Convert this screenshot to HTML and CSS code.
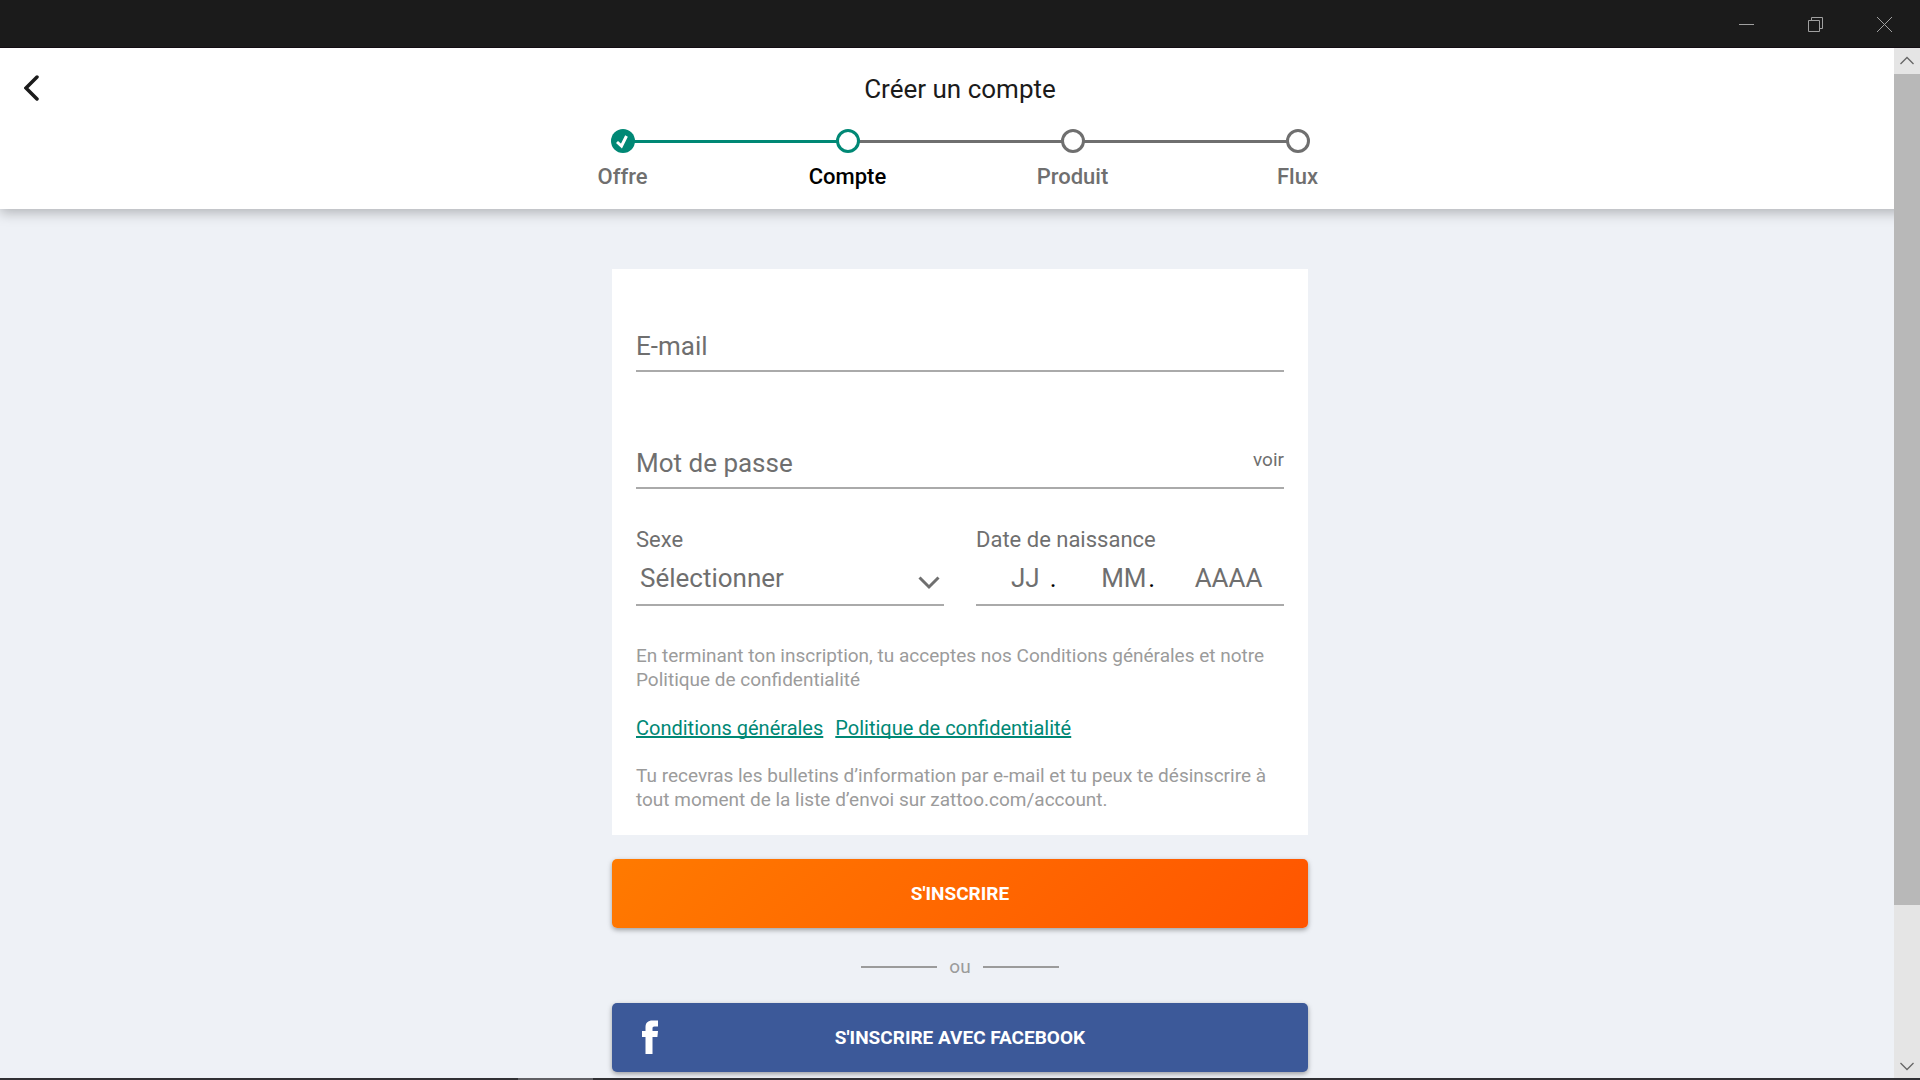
FILE: index.html
```html
<!DOCTYPE html>
<html lang="fr">
<head>
  <meta charset="UTF-8">
  <meta name="viewport" content="width=device-width, initial-scale=1.0">
  <title>Créer un compte</title>
  <link rel="stylesheet" href="styles.css">
</head>
<body>
  <div class="titlebar">
    <button type="button" aria-label="Réduire">
      <svg width="15" height="15" viewBox="0 0 15 15"><path d="M0 7.5h15"/></svg>
    </button>
    <button type="button" aria-label="Restaurer">
      <svg width="15" height="15" viewBox="0 0 15 15"><path d="M.5 3.500h11v11h-11zM3.500 3.500v-3h11v11h-3"/></svg>
    </button>
    <button type="button" aria-label="Fermer">
      <svg width="15" height="15" viewBox="0 0 15 15"><path d="M0 0l15 15M15 0l-15 15"/></svg>
    </button>
  </div>

  <div class="window">
    <header class="header">
      <div class="topline">
        <button type="button" class="back" aria-label="Retour">
          <svg width="16" height="32" viewBox="0 0 16 32"><path d="M13 5L2 16l11 11"/></svg>
        </button>
        <h1>Créer un compte</h1>
      </div>
      <ol class="steps">
        <li class="done">
          <span class="dot"><svg width="24" height="24" viewBox="0 0 24 24"><path d="M6 13l4.500 4L15.500 7"/></svg></span>
          Offre
        </li>
        <li class="current"><span class="dot"></span>Compte</li>
        <li><span class="dot"></span>Produit</li>
        <li><span class="dot"></span>Flux</li>
      </ol>
    </header>

    <main class="content">
      <form class="signup">
        <div class="card">
          <div class="field">
            <label for="email">E-mail</label>
            <input type="email" id="email">
          </div>
          <div class="field">
            <label for="password">Mot de passe</label>
            <input type="password" id="password">
            <button type="button" class="show">voir</button>
          </div>

          <div class="row">
            <div class="group">
              <label for="gender">Sexe</label>
              <div class="select">
                <select id="gender">
                  <option>Sélectionner</option>
                  <option>Femme</option>
                  <option>Homme</option>
                </select>
                <svg width="22" height="14" viewBox="0 0 22 14"><path d="M1.500 1.500L11 11 20.500 1.500"/></svg>
              </div>
            </div>
            <div class="group">
              <label for="day">Date de naissance</label>
              <div class="date">
                <div class="part"><input type="text" id="day" placeholder="JJ" aria-label="Jour"><span>.</span></div>
                <div class="part"><input type="text" placeholder="MM" aria-label="Mois"><span>.</span></div>
                <div class="part"><input type="text" placeholder="AAAA" aria-label="Année"></div>
              </div>
            </div>
          </div>

          <p>En terminant ton inscription, tu acceptes nos Conditions générales et notre Politique de confidentialité</p>
          <p class="links">
            <a href="#">Conditions générales</a>
            <a href="#">Politique de confidentialité</a>
          </p>
          <p>Tu recevras les bulletins d’information par e-mail et tu peux te désinscrire à tout moment de la liste d’envoi sur zattoo.com/account.</p>
        </div>

        <button type="submit" class="btn">S'INSCRIRE</button>
        <div class="or">ou</div>
        <button type="button" class="btn facebook">
          <svg width="18" height="34" viewBox="0 0 18 34"><path d="M4.500 34V17H1v-6h3.500V7.500C4.500 2.500 7 .5 11.500 .5H17v6h-3.500c-1.600 0-2 .8-2 2V11H17l-.6 6h-4.900v17z"/></svg>
          S'INSCRIRE AVEC FACEBOOK
        </button>
      </form>
    </main>

    <div class="scrollbar">
      <svg width="26" height="26" viewBox="0 0 26 26"><path d="M6.500 16L13 9.500 19.500 16"/></svg>
      <div class="track"><div class="thumb"></div></div>
      <svg width="26" height="26" viewBox="0 0 26 26"><path d="M6.500 11L13 17.500 19.500 11"/></svg>
    </div>
  </div>

  <div class="taskbar"><span></span></div>
</body>
</html>
```
FILE: styles.css
```css
* {
  box-sizing: border-box;
}

body {
  margin: 0;
  height: 100vh;
  display: flex;
  flex-direction: column;
  overflow: hidden;
  font-family: Roboto, "Liberation Sans", sans-serif;
  font-size: 19px;
  line-height: 24px;
  color: #6f6f6f;
  background: #eef1f6;
}

button,
input,
select {
  font: inherit;
  color: inherit;
  margin: 0;
  padding: 0;
  border: 0;
  border-radius: 0;
  background: none;
}

svg {
  display: block;
  fill: none;
  stroke: currentColor;
}

/* window title bar */
.titlebar {
  flex: none;
  height: 48px;
  display: flex;
  justify-content: flex-end;
  padding-right: 1px;
  color: #a0a0a0;
  background: #1b1b1b;
  box-shadow: inset 0 -1px #130d13;
}

.titlebar button {
  width: 69px;
  display: flex;
  align-items: center;
  justify-content: center;
}

.window {
  position: relative;
  flex: 1;
  min-height: 0;
  overflow: hidden;
}

/* header with progress steps */
.header {
  position: relative;
  padding: 24px 24px 16px;
  background: #fff;
  box-shadow: 0 4px 12px rgba(0, 0, 0, .25);
}

.topline {
  display: flex;
  align-items: flex-start;
}

.back {
  width: 16px;
  color: #1b1b1b;
}

.back svg {
  stroke-width: 3.5;
  stroke-linecap: round;
}

h1 {
  flex: 1;
  margin: 0 16px 0 0;
  font-size: 26px;
  font-weight: 400;
  line-height: 35px;
  text-align: center;
  color: #1b1b1b;
}

.steps {
  display: flex;
  width: 900px;
  max-width: 100%;
  margin: 22px auto 0;
  padding: 0;
  list-style: none;
}

.steps li {
  position: relative;
  flex: 1;
  display: flex;
  flex-direction: column;
  align-items: center;
  gap: 8px;
  font-size: 22px;
  font-weight: 500;
  line-height: 32px;
}

.steps li + li::before {
  content: "";
  position: absolute;
  top: 11px;
  right: 50%;
  width: 100%;
  height: 3px;
  background: #6f6f6f;
}

.steps .current::before {
  background: #008875;
}

.steps li.current {
  color: #000;
}

.dot {
  position: relative;
  z-index: 1;
  width: 24px;
  height: 24px;
  border: 3px solid #6f6f6f;
  border-radius: 50%;
  background: #fff;
}

.current .dot {
  border-color: #008875;
}

.done .dot {
  border: 0;
  color: #fff;
  background: #008875;
}

.dot svg {
  stroke-width: 3;
}

/* sign up form */
.content {
  padding: 60px 24px;
}

.signup {
  width: 696px;
  max-width: 100%;
  margin: 0 auto;
}

.card {
  padding: 48px 24px 23px;
  background: #fff;
}

.field {
  position: relative;
  margin-bottom: 62px;
  font-size: 26px;
}

.field label {
  position: absolute;
  left: 0;
  bottom: 14px;
  line-height: 24px;
}

.field input {
  display: block;
  width: 100%;
  height: 55px;
}

.field input,
.select select,
.part input {
  border-bottom: 2px solid #aaa;
}

.field:nth-child(2) {
  margin-bottom: 36px;
}

.show {
  position: absolute;
  right: 0;
  bottom: 17px;
  font-size: 19px;
}

.row {
  display: flex;
  gap: 32px;
  margin-bottom: 38px;
}

.group {
  flex: 1;
}

.group label {
  display: block;
  font-size: 22px;
  line-height: 30px;
}

.select {
  position: relative;
}

.select select {
  display: block;
  width: 100%;
  height: 51px;
  padding: 0 4px 4px;
  font-size: 26px;
  appearance: none;
}

.select svg {
  position: absolute;
  right: 4px;
  bottom: 16px;
  stroke-width: 3;
}

.date {
  display: grid;
  grid-template-columns: 8fr 8fr 9fr;
}

.part {
  position: relative;
}

.part input {
  display: block;
  width: 100%;
  height: 51px;
  padding-bottom: 4px;
  font-size: 26px;
  text-align: center;
}

.part input::placeholder {
  color: #6f6f6f;
}

.part span {
  position: absolute;
  right: 18px;
  bottom: 16px;
  font-size: 26px;
  color: #000;
}

.card p {
  margin: 0 0 24px;
  color: #9b9b9b;
}

.card p:last-child {
  margin-bottom: 0;
}

.card .links {
  display: flex;
  gap: 12px;
  font-size: 20px;
}

.links a {
  color: #008875;
  text-decoration-thickness: 2px;
  text-decoration-skip-ink: none;
}

.btn {
  position: relative;
  display: block;
  width: 100%;
  height: 69px;
  margin-top: 24px;
  border-radius: 5px;
  font-weight: 700;
  color: #fff;
  background: linear-gradient(135deg, #ff7a00, #ff5500);
  box-shadow: 0 2px 5px rgba(0, 0, 0, .35);
}

.or {
  display: flex;
  align-items: center;
  justify-content: center;
  gap: 12px;
  margin-top: 27px;
  color: #9b9b9b;
}

.or::before,
.or::after {
  content: "";
  width: 76px;
  height: 2px;
  background: #9b9b9b;
}

.facebook {
  background: #3c5999;
}

.facebook svg {
  position: absolute;
  left: 29px;
  top: 17px;
  fill: #fff;
  stroke: none;
}

.scrollbar {
  position: absolute;
  top: 0;
  right: 0;
  bottom: 0;
  width: 26px;
  display: flex;
  flex-direction: column;
  color: #666;
  background: #e5e5e5;
}

.scrollbar svg {
  stroke-width: 1.3;
}

.track {
  flex: 1;
}

.thumb {
  height: 85%;
  background: #b8b8b8;
}

.taskbar {
  flex: none;
  height: 2px;
  background: #303034;
}

.taskbar span {
  display: block;
  width: 75px;
  height: 2px;
  margin-left: 27%;
  background: #606064;
}
```
